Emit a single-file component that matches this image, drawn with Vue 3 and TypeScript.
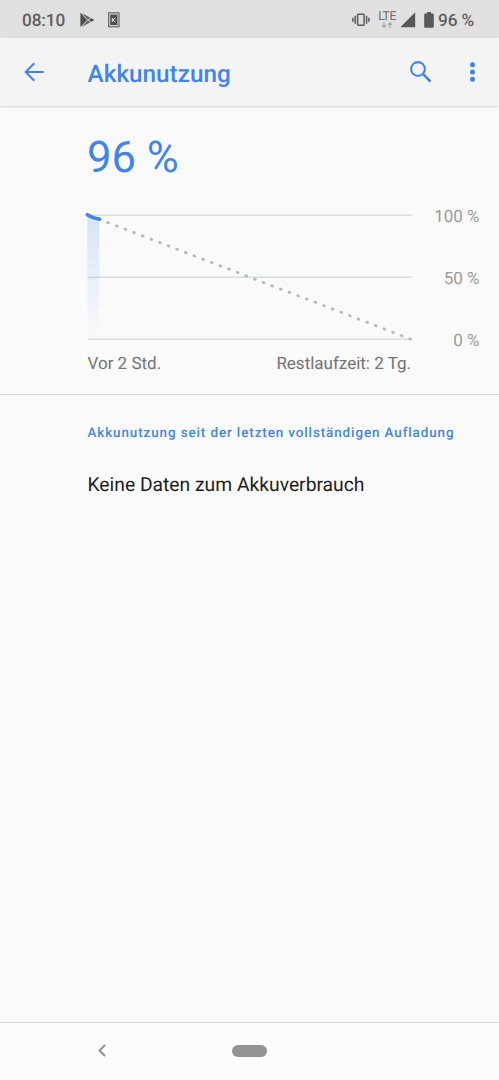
<script setup lang="ts">
interface Dot {
  x: number
  y: number
}

const scaleLabels: string[] = ['100 %', '50 %', '0 %']
const gridLines: number[] = [10.3, 72.3, 134.3]

// Projected discharge, from the current level down to empty
const projection: Dot[] = Array.from({ length: 36 }, (_, i) => ({
  x: 26.4 + i * 8.634,
  y: 17.7 + i * 3.325,
}))
</script>

<template>
  <div class="screen">
    <header class="status">
      <span class="clock">08:10</span>
      <svg class="play" width="15" height="16" viewBox="0 0 15 16">
        <path d="M.4 .8v14.2l6.8-7z" fill="#505050" />
        <path d="M1.4 .9l9 4.8-2.5 2.1zM1.4 15.1l9-4.8-2.5-2.1z" fill="#646464" />
        <path d="M11.1 5.9l3.2 2.1-3.2 2.1L9 8z" fill="#505050" />
      </svg>
      <svg class="sim" width="12" height="16" viewBox="0 0 12 16">
        <rect x=".6" y=".8" width="10.4" height="14" fill="#d0d0d0" stroke="#626262" stroke-width="1.1" />
        <rect x="2.2" y="2.6" width="7.2" height="10.4" fill="#505050" />
        <path d="M4.4 6v3.8M7.3 6L5 7.9l2.3 1.9" fill="none" stroke="#e4e4e4" stroke-width="1" />
      </svg>
      <span class="grow"></span>
      <svg class="vibrate" width="18" height="14" viewBox="0 0 18 14">
        <rect x="5.6" y="1.2" width="6.5" height="11" rx=".8" fill="none" stroke="#5c5c5c" stroke-width="1.5" />
        <path d="M3.2 2.8v8M14.6 2.8v8M.9 4.8v4M16.9 4.8v4" stroke="#5c5c5c" stroke-width="1.5" />
      </svg>
      <span class="network">
        <span class="lte">LTE</span>
        <svg width="12" height="6" viewBox="0 0 12 6">
          <path d="M3 0v5M1 3.2l2 2 2-2M9 6V1M7 2.8l2-2 2 2" fill="none" stroke="#a0a0a0" stroke-width="1.1" />
        </svg>
      </span>
      <svg class="signal" width="16" height="16" viewBox="0 0 16 16">
        <path d="M15.2.3v15H.3z" fill="#585858" />
      </svg>
      <svg class="battery" width="10" height="16" viewBox="0 0 10 16">
        <path d="M3 0h4v1.6h1.8q1 0 1 1v12.2q0 1-1 1H1.2q-1 0-1-1V2.6q0-1 1-1H3z" fill="#585858" />
      </svg>
      <span class="level">96 %</span>
    </header>

    <div class="appbar">
      <svg class="back" width="20" height="20" viewBox="0 0 20 20">
        <path d="M19.6 10H1.8M10.3 1.3L1.6 10l8.7 8.7" fill="none" stroke="#4285e8" stroke-width="2.1" />
      </svg>
      <h1>Akkunutzung</h1>
      <svg class="search" width="22" height="22" viewBox="0 0 22 22">
        <circle cx="8" cy="8" r="6.9" fill="none" stroke="#4285e8" stroke-width="2.1" />
        <path d="M12.8 12.8l7.7 7.7" stroke="#4285e8" stroke-width="2.6" />
      </svg>
      <svg class="more" width="6" height="20" viewBox="0 0 6 20">
        <circle cx="2.5" cy="2.7" r="2.5" fill="#4285e8" />
        <circle cx="2.5" cy="10" r="2.5" fill="#4285e8" />
        <circle cx="2.5" cy="17.3" r="2.5" fill="#4285e8" />
      </svg>
    </div>

    <section class="usage">
      <div class="percent">96 %</div>
      <div class="chart">
        <svg width="334" height="140" viewBox="0 0 334 140">
          <defs>
            <linearGradient id="charge" x1="0" y1="0" x2="0" y2="1">
              <stop offset="0" stop-color="#4285e8" stop-opacity=".19" />
              <stop offset="1" stop-color="#4285e8" stop-opacity="0" />
            </linearGradient>
          </defs>
          <path v-for="y in gridLines" :key="y" :d="`M5.5 ${y}H329.7`" stroke="#d9dbe0" stroke-width="1.5" />
          <path d="M5.3 10l5 2.8 7 1.6V134H5.3z" fill="url(#charge)" />
          <path
            v-for="(dot, i) in projection"
            :key="i"
            :d="`M${dot.x - 0.75} ${dot.y - 0.25}l.9 .35`"
            stroke="#a9bbc4"
            stroke-width="2.7"
            stroke-linecap="round"
          />
          <path d="M5.3 9.7Q11 13.5 17.6 14.3" fill="none" stroke="#4285e8" stroke-width="3.6" stroke-linecap="round" />
        </svg>
        <div class="scale">
          <span v-for="label in scaleLabels" :key="label">{{ label }}</span>
        </div>
      </div>
      <div class="times">
        <span>Vor 2 Std.</span>
        <span class="remaining">Restlaufzeit: 2 Tg.</span>
      </div>
    </section>

    <main class="details">
      <h2>Akkunutzung seit der letzten vollständigen Aufladung</h2>
      <p>Keine Daten zum Akkuverbrauch</p>
    </main>

    <nav class="navbar">
      <svg width="8" height="13" viewBox="0 0 8 13">
        <path d="M7 1L1.5 6.5 7 12" fill="none" stroke="#8e8e8e" stroke-width="1.8" />
      </svg>
      <span class="home"></span>
    </nav>
  </div>
</template>

<style>
body {
  margin: 0;
  background: #fafafa;
}
</style>

<style scoped>
.screen {
  width: 499px;
  height: 1080px;
  display: flex;
  flex-direction: column;
  overflow: hidden;
  background: #fafafa;
  font-family: Roboto, "Liberation Sans", sans-serif;
  text-rendering: geometricPrecision;
}
svg {
  display: block;
  flex: none;
}
span {
  white-space: nowrap;
}
.status {
  height: 38px;
  flex: none;
  box-sizing: border-box;
  padding: 1px 25px 0 22px;
  display: flex;
  align-items: center;
  background: #e0e0e0;
  color: #606060;
  font-size: 17.2px;
}
.clock,
.level {
  padding-top: 2px;
  letter-spacing: -.1px;
  font-weight: 500;
}
.clock {
  width: 58px;
}
.sim {
  margin-left: 13px;
}
.grow {
  flex: 1;
}
.network {
  width: 18px;
  margin: 0 3.5px 0 8px;
  display: flex;
  flex-direction: column;
  align-items: center;
}
.lte {
  color: #6c6c6c;
  font-size: 12.2px;
  line-height: 11px;
  letter-spacing: -.5px;
}
.battery {
  margin: 0 4.5px 0 8px;
}
.level {
  width: 36px;
}
.appbar {
  height: 68px;
  flex: none;
  box-sizing: border-box;
  padding: 0 24px;
  display: flex;
  align-items: center;
  background: #f4f4f4;
  box-shadow: 0 1px 2px rgba(0, 0, 0, .16);
}
h1 {
  flex: 1;
  margin: 4px 0 0 43.6px;
  color: #4285e8;
  font-size: 24.3px;
  font-weight: 500;
  line-height: 30px;
}
.search {
  margin-right: 38px;
}
.more {
  margin-right: -.5px;
}
.usage {
  height: 289px;
  flex: none;
  box-sizing: border-box;
  padding: 27px 19px 0 82px;
  border-bottom: 1.5px solid #dadbe1;
}
.percent {
  height: 50px;
  margin: 0 0 22px 5px;
  color: #4285e8;
  font-size: 43.6px;
  line-height: 50px;
}
.chart {
  height: 140px;
  display: flex;
  justify-content: space-between;
}
.scale {
  height: 144px;
  margin: 2px .5px 0 0;
  display: flex;
  flex-direction: column;
  justify-content: space-between;
  align-items: flex-end;
  color: #9a9a9a;
  font-size: 17px;
  line-height: 20px;
}
.times {
  display: flex;
  justify-content: space-between;
  margin: 9px 69px 0 5.5px;
  color: #737373;
  font-size: 17px;
  line-height: 20px;
}
.details {
  flex: 1;
  padding: 29px 0 0 87.5px;
}
h2 {
  margin: 0;
  color: #4285e8;
  font-size: 13.4px;
  font-weight: 500;
  line-height: 20px;
  letter-spacing: .91px;
  white-space: nowrap;
}
p {
  margin: 28px 0 0;
  color: #1d1d1d;
  font-size: 19.3px;
  line-height: 26px;
}
.navbar {
  height: 58px;
  flex: none;
  box-sizing: border-box;
  padding: 0 98px 2px;
  display: flex;
  align-items: center;
  background: #fcfcfc;
  border-top: 1px solid #d8d8d8;
}
.home {
  width: 35px;
  height: 12px;
  margin-left: 126px;
  border-radius: 6px;
  background: #939393;
}
</style>
